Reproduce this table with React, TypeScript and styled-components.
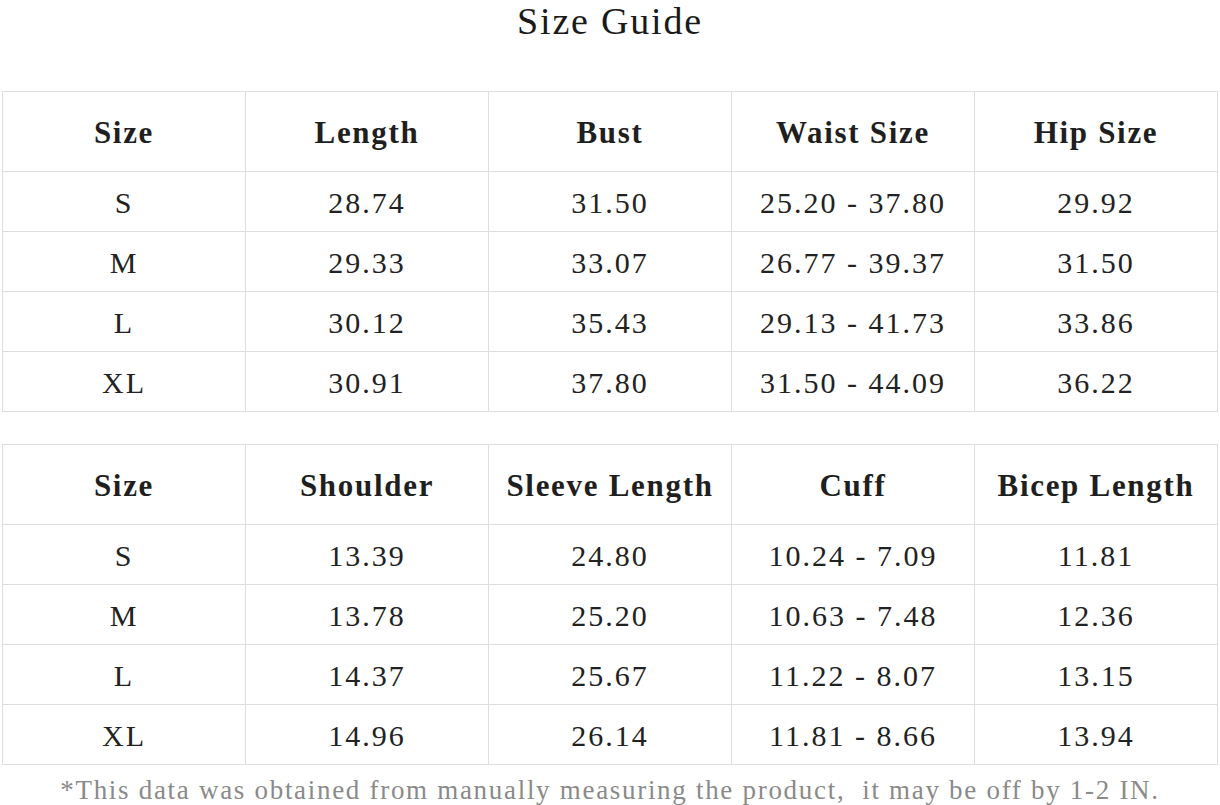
import React from "react";
import styled, { createGlobalStyle } from "styled-components";

const GlobalStyle = createGlobalStyle`
  html, body { margin: 0; padding: 0; background: #ffffff; }
  body { font-family: "Liberation Serif", "Noto Sans CJK SC", serif; color: #1c1c1c; }
`;

const Page = styled.div`
  width: 1220px;
  height: 805px;
  overflow: hidden;
  display: flex;
  flex-direction: column;
  align-items: flex-start;
`;

const Title = styled.h1`
  align-self: stretch;
  margin: 0;
  height: 91px;
  box-sizing: border-box;
  text-align: center;
  font-family: "Liberation Serif", serif;
  font-weight: 400;
  font-size: 38px;
  letter-spacing: 1.8px;
  line-height: 43px;
  color: #1a1a1a;
`;

const Grid = styled.div<{ $gap?: number }>`
  display: grid;
  grid-template-columns: repeat(5, 243px);
  margin-left: 2px;
  margin-top: ${(p) => p.$gap ?? 0}px;
  border-left: 1px solid #dedede;
  border-top: 1px solid #dedede;
`;

const Cell = styled.div<{ $head?: boolean }>`
  box-sizing: border-box;
  height: ${(p) => (p.$head ? 80 : 60)}px;
  border-right: 1px solid #dedede;
  border-bottom: 1px solid #dedede;
  display: flex;
  align-items: center;
  justify-content: center;
  white-space: nowrap;
  font-family: "Liberation Serif", serif;
  font-size: ${(p) => (p.$head ? 31 : 30)}px;
  letter-spacing: ${(p) => (p.$head ? 1.7 : 2)}px;
  font-weight: ${(p) => (p.$head ? 700 : 400)};
  color: ${(p) => (p.$head ? "#1f1f1f" : "#222222")};
  padding-top: 2px;
`;

const Note = styled.p`
  align-self: stretch;
  margin: 10px 0 0 0;
  text-align: center;
  font-family: "Liberation Serif", serif;
  font-size: 27px;
  letter-spacing: 1.7px;
  line-height: 30px;
  color: #8a8a8a;
  white-space: nowrap;
`;

type Table = { head: string[]; rows: string[][] };

const tables: Table[] = [
  {
    head: ["Size", "Length", "Bust", "Waist Size", "Hip Size"],
    rows: [
      ["S", "28.74", "31.50", "25.20 - 37.80", "29.92"],
      ["M", "29.33", "33.07", "26.77 - 39.37", "31.50"],
      ["L", "30.12", "35.43", "29.13 - 41.73", "33.86"],
      ["XL", "30.91", "37.80", "31.50 - 44.09", "36.22"],
    ],
  },
  {
    head: ["Size", "Shoulder", "Sleeve Length", "Cuff", "Bicep Length"],
    rows: [
      ["S", "13.39", "24.80", "10.24 - 7.09", "11.81"],
      ["M", "13.78", "25.20", "10.63 - 7.48", "12.36"],
      ["L", "14.37", "25.67", "11.22 - 8.07", "13.15"],
      ["XL", "14.96", "26.14", "11.81 - 8.66", "13.94"],
    ],
  },
];

export default function App() {
  return (
    <>
      <GlobalStyle />
      <Page>
        <Title>Size Guide</Title>
        {tables.map((t, ti) => (
          <Grid key={ti} $gap={ti === 0 ? 0 : 32}>
            {t.head.map((h) => (
              <Cell key={h} $head>
                {h}
              </Cell>
            ))}
            {t.rows.map((r, ri) =>
              r.map((c, ci) => <Cell key={`${ri}-${ci}`}>{c}</Cell>)
            )}
          </Grid>
        ))}
        <Note>
          *This data was obtained from manually measuring the product,&nbsp; it may be off by 1-2 IN.
        </Note>
      </Page>
    </>
  );
}
